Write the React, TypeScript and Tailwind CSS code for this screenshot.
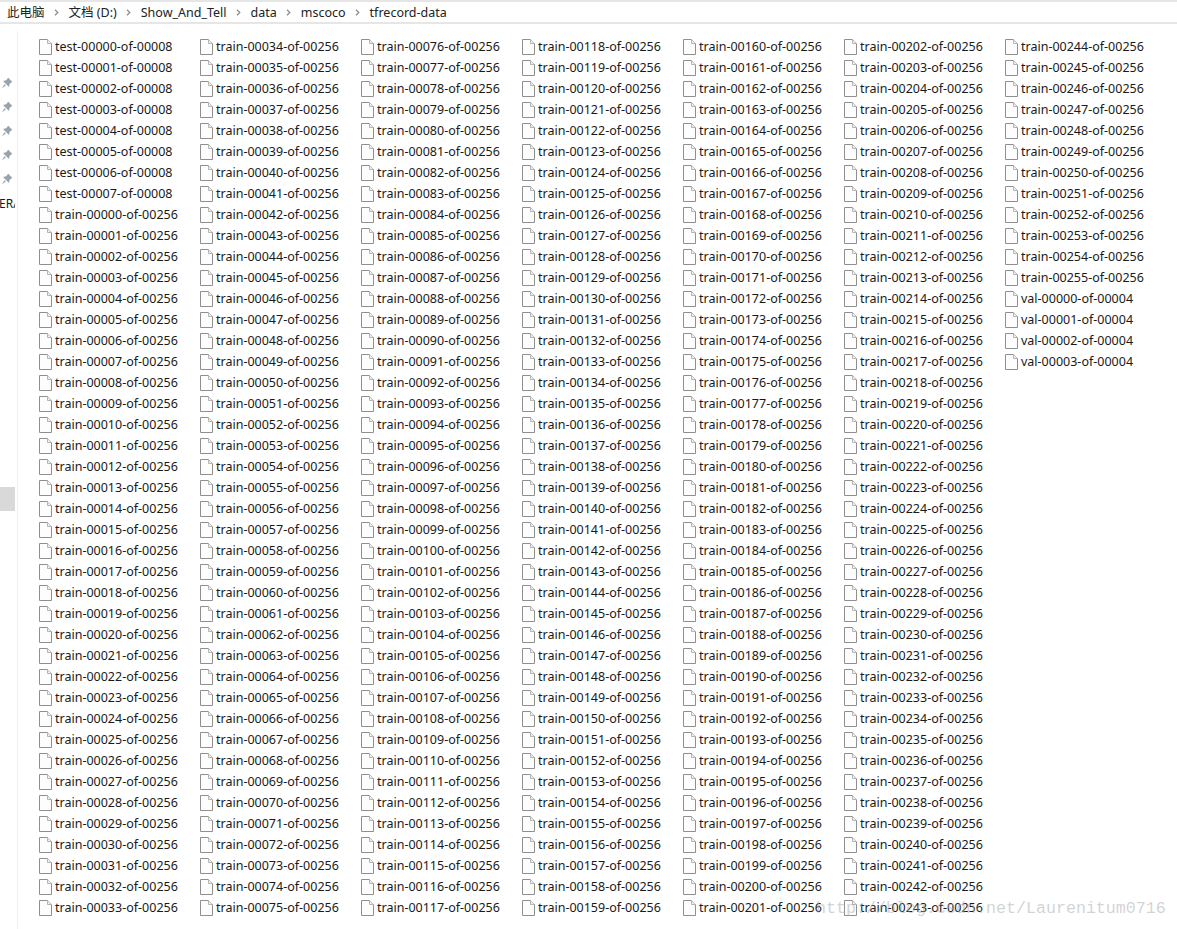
const pad = (n: number) => String(n).padStart(5, "0");

const names: string[] = [
  ...Array.from({ length: 8 }, (_, i) => `test-${pad(i)}-of-00008`),
  ...Array.from({ length: 256 }, (_, i) => `train-${pad(i)}-of-00256`),
  ...Array.from({ length: 4 }, (_, i) => `val-${pad(i)}-of-00004`),
];

const columns: string[][] = [];
for (let i = 0; i < names.length; i += 42) columns.push(names.slice(i, i + 42));

const crumbs = ["此电脑", "文档 (D:)", "Show_And_Tell", "data", "mscoco", "tfrecord-data"];

const FileIcon = () => (
  <svg width="13" height="16" viewBox="0 0 13 16" className="shrink-0">
    <path d="M0.5 0.5H8.5L12.5 4.5V15.5H0.5Z" fill="#fdfdfd" stroke="#8f8f8f" />
    <path d="M8.5 0.5V4.5H12.5" fill="#f0f0f0" stroke="#b5b5b5" />
  </svg>
);

const PinIcon = () => (
  <svg width="12" height="12" viewBox="0 0 12 12">
    <path d="M7 0.5L11.5 5L10 5.6L8.4 7.4L8 10L2 4L4.6 3.6L6.4 2Z" fill="#9aa3ab" />
    <path d="M3.6 7.2L0.6 11.4L4.8 8.4Z" fill="#9aa3ab" />
  </svg>
);

const Chevron = () => (
  <svg width="5" height="7" viewBox="0 0 5 7" className="shrink-0">
    <path d="M1 0.8L3.8 3.5L1 6.2" fill="none" stroke="#8a8a8a" strokeWidth="1.2" />
  </svg>
);

export default function App() {
  return (
    <div className="relative w-[1177px] h-[929px] overflow-hidden bg-white text-[12.5px] leading-[21px] text-[#1a1a1a] font-['Noto_Sans','Noto_Sans_CJK_SC',sans-serif]">
      {/* address bar */}
      <div className="h-[24px] border-t-2 border-b-2 border-[#e6e6e6] flex items-center gap-[9.5px] pl-[7px] text-[#222]">
        {crumbs.map((c, i) => (
          <div key={c} className="flex items-center gap-[9.5px]">
            {i > 0 && <Chevron />}
            <span className="whitespace-nowrap">{c}</span>
          </div>
        ))}
      </div>

      <div className="flex h-[905px]">
        {/* nav pane edge */}
        <div className="w-[18px] shrink-0 border-r border-[#f0f0f0] mt-[7px] flex flex-col overflow-hidden">
          <div className="flex flex-col gap-[12px] pt-[46px] pl-[1px]">
            <PinIcon />
            <PinIcon />
            <PinIcon />
            <PinIcon />
            <PinIcon />
          </div>
          <div className="mt-[11px] h-[16px] text-[12px] leading-[16px] whitespace-nowrap -ml-[1px] w-[16px] overflow-hidden">
            ERA
          </div>
          <div className="mt-[275px] w-[15px] h-[24px] bg-[#d9d9d9]" />
        </div>

        {/* file list */}
        <div className="flex pt-[12px] pl-[21px]">
          {columns.map((col, i) => (
            <div key={i} className="w-[161px] shrink-0">
              {col.map((name) => (
                <div key={name} className="h-[21px] flex items-center gap-[3px] whitespace-nowrap">
                  <FileIcon />
                  <span>{name}</span>
                </div>
              ))}
            </div>
          ))}
        </div>
      </div>

      {/* watermark */}
      <div className="absolute left-[816px] top-[898px] text-[16.67px] leading-[22px] text-[#a8a8a8]/50 whitespace-nowrap font-['Liberation_Mono',monospace]">
        http://blog.csdn.net/Laurenitum0716
      </div>
    </div>
  );
}
